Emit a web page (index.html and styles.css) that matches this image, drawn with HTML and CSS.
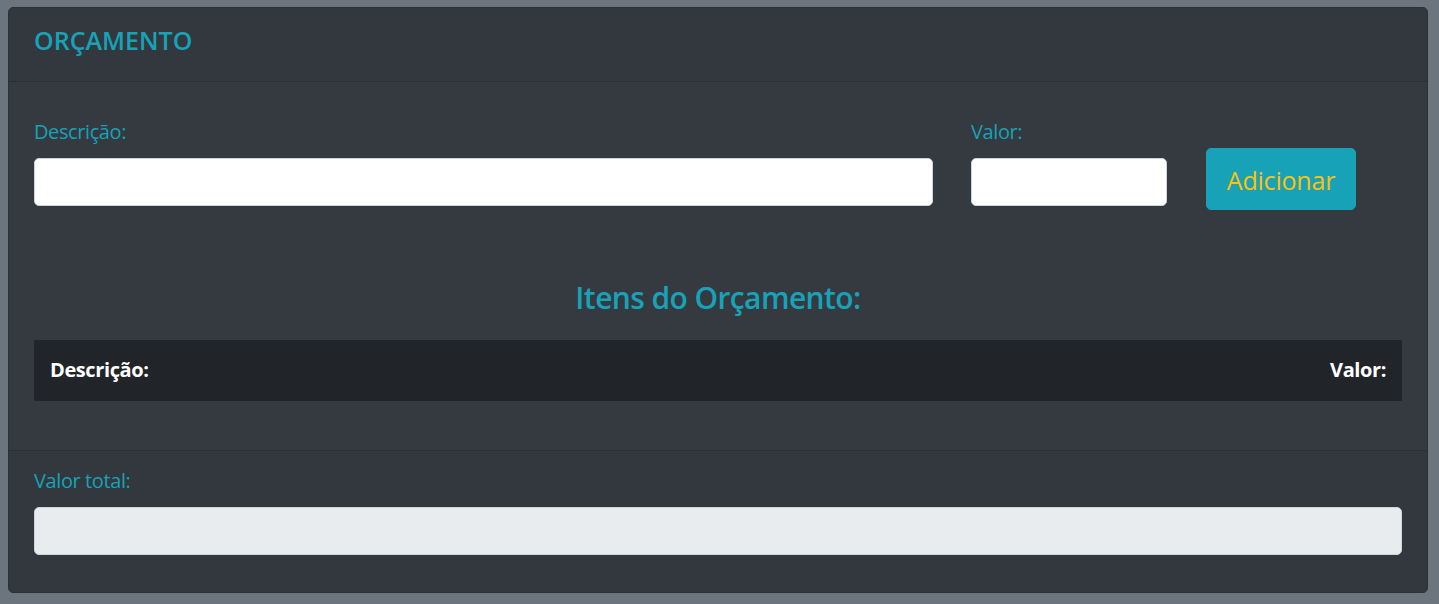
FILE: index.html
```html
<!DOCTYPE html>
<html lang="pt-BR">
<head>
<meta charset="utf-8">
<title>Orçamento</title>
<link rel="stylesheet" href="styles.css">
</head>
<body>
<div class="card">
  <div class="card-header">
    <h4 class="card-title">ORÇAMENTO</h4>
  </div>
  <div class="card-body">
    <form class="entry-row">
      <div class="field field-desc">
        <label class="field-label" for="desc">Descrição:</label>
        <input class="form-input" id="desc" type="text">
      </div>
      <div class="field field-valor">
        <label class="field-label" for="valor">Valor:</label>
        <input class="form-input" id="valor" type="text">
      </div>
      <div class="field field-btn">
        <button class="btn-add" type="button">Adicionar</button>
      </div>
    </form>
    <h2 class="items-title">Itens do Orçamento:</h2>
    <table class="items-table">
      <thead>
        <tr>
          <th class="col-desc">Descrição:</th>
          <th class="col-valor">Valor:</th>
        </tr>
      </thead>
      <tbody></tbody>
    </table>
  </div>
  <div class="card-footer">
    <label class="field-label" for="total">Valor total:</label>
    <input class="form-input form-input-readonly" id="total" type="text" readonly>
  </div>
</div>
</body>
</html>
```

FILE: styles.css
```css
* {
  box-sizing: border-box;
}

html, body {
  height: 100%;
}

body {
  margin: 0;
  padding: 7px 11px 11px 8px;
  background: #6c757d;
  font-family: "Open Sans", "Noto Sans", sans-serif;
  color: #fff;
}

.card {
  background: #343a40;
  border: 1px solid #2c3136;
  border-radius: 5px;
  overflow: hidden;
}

.card-header {
  background: #32383e;
  border-bottom: 1px solid #2a2f34;
  padding: 18px 25px 26px;
  height: 74px;
}

.card-title {
  margin: 0;
  font-size: 25px;
  line-height: 29px;
  font-weight: 600;
  color: #17a2b8;
}

.card-body {
  padding: 35px 25px 49px;
  height: 368px;
}

.entry-row {
  display: flex;
  align-items: flex-start;
  margin: 0;
}

.field {
  display: flex;
  flex-direction: column;
}

.field-desc {
  width: 899px;
}

.field-valor {
  width: 196px;
  margin-left: 38px;
}

.field-btn {
  margin-left: 39px;
  padding-top: 31px;
}

.field-label {
  display: block;
  font-size: 20px;
  line-height: 30px;
  letter-spacing: -0.4px;
  color: #17a2b8;
  margin-bottom: 11px;
}

.form-input {
  display: block;
  width: 100%;
  height: 48px;
  padding: 8px 16px;
  font-family: inherit;
  font-size: 20px;
  background: #fff;
  border: 1px solid #ced4da;
  border-radius: 5px;
  outline: none;
}

.form-input-readonly {
  background: #e9ecef;
}

.btn-add {
  width: 150px;
  height: 62px;
  background: #17a2b8;
  border: 1px solid #17a2b8;
  border-radius: 5px;
  color: #ffc107;
  font-family: inherit;
  font-size: 25px;
  line-height: 1;
  letter-spacing: -0.2px;
  text-align: center;
  padding: 3px 0 0;
  cursor: pointer;
}

.items-title {
  margin: 69px 0 23px;
  text-align: center;
  font-size: 30px;
  line-height: 38px;
  letter-spacing: -0.6px;
  font-weight: 600;
  color: #17a2b8;
}

.items-table {
  width: 100%;
  border-collapse: collapse;
}

.items-table th {
  background: #212529;
  color: #fff;
  font-size: 20px;
  line-height: 30px;
  letter-spacing: -0.4px;
  font-weight: 700;
  padding: 15px 16px 16px;
}

.col-desc {
  text-align: left;
}

.col-valor {
  text-align: right;
}

.card-footer {
  background: #32383e;
  border-top: 1px solid #2a2f34;
  padding: 15px 25px 37px;
  height: 142px;
}
```
